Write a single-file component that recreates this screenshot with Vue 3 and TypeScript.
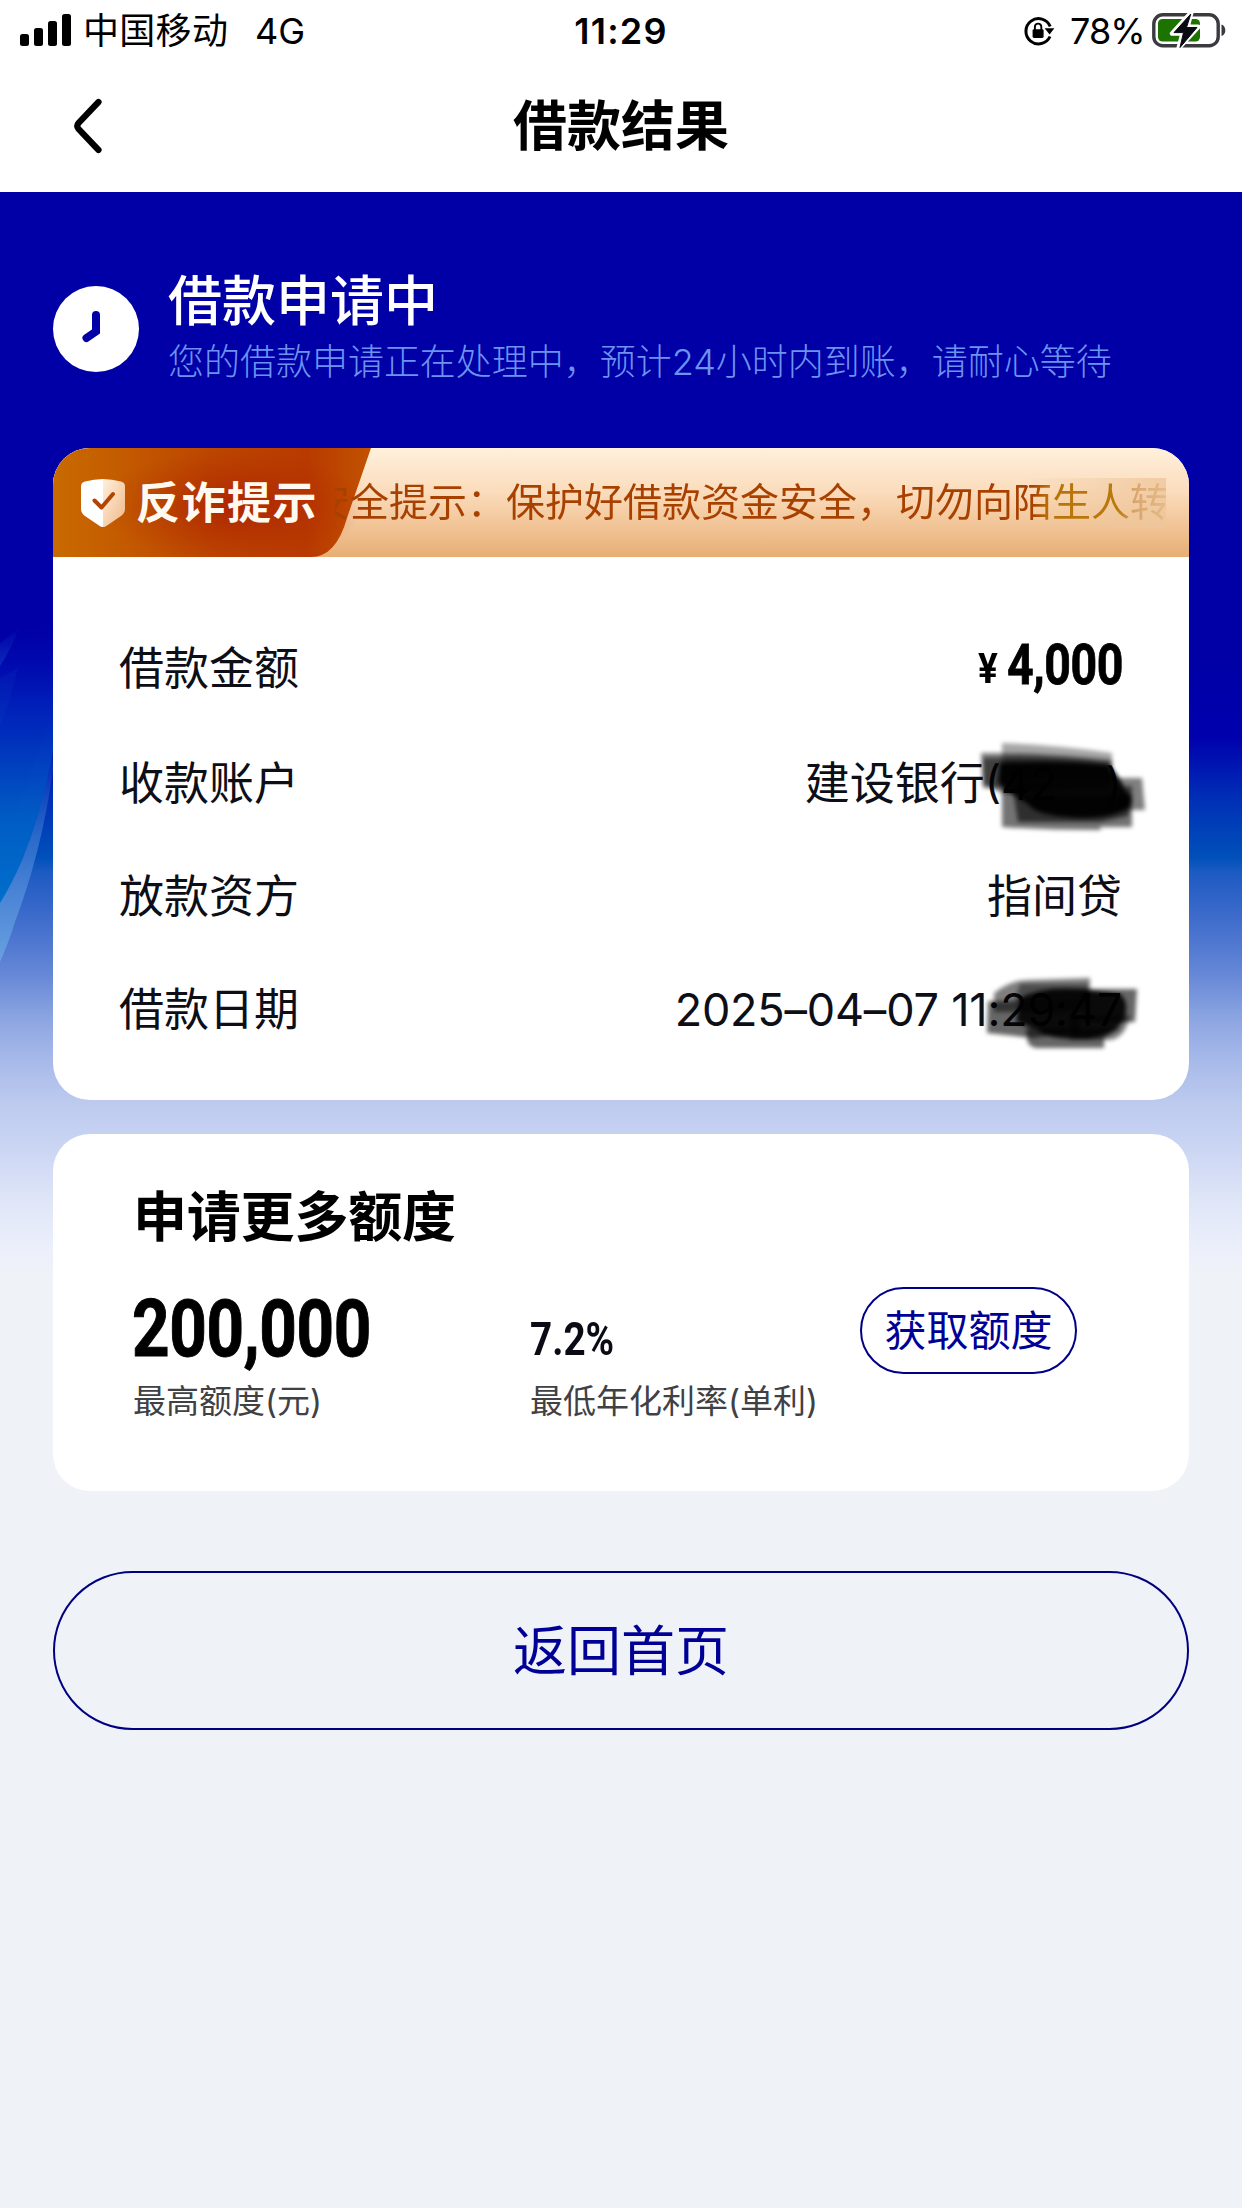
<script setup lang="ts">
interface Detail {
  key: string
  label: string
}

const details: Detail[] = [
  { key: 'amount', label: '借款金额' },
  { key: 'account', label: '收款账户' },
  { key: 'lender', label: '放款资方' },
  { key: 'date', label: '借款日期' },
]

const signalBars: number[] = [12, 18, 25, 32]
</script>

<template>
  <div class="page">
    <header class="status">
      <div class="status-left">
        <div class="signal">
          <i v-for="h in signalBars" :key="h" :style="{ height: h + 'px' }"></i>
        </div>
        <span class="carrier">中国移动</span>
        <span class="network">4G</span>
      </div>
      <span class="time">11:29</span>
      <div class="status-right">
        <svg class="lock" viewBox="0 0 34 32" width="34" height="32">
          <path d="M28 21.5A12.6 12.6 0 1 1 28.2 11.5" fill="none" stroke="#000" stroke-width="3" />
          <path d="M22.6 13.2H32.4L27.6 19.6Z" fill="#000" />
          <rect x="10.6" y="14.2" width="11" height="8.8" rx="1.4" fill="#000" />
          <path d="M12.9 15V11.8a3.2 3.2 0 0 1 6.4 0V15" fill="none" stroke="#000" stroke-width="1.9" />
        </svg>
        <span class="percent">78%</span>
        <svg class="battery" viewBox="0 0 76 40" width="76" height="40">
          <rect x="1.8" y="4.8" width="64.4" height="31" rx="9" fill="#fff" stroke="#3b3a3f" stroke-width="3.4" />
          <path d="M69.5 14.5C74.6 16 74.6 24.600 69.5 26Z" fill="#3b3a3f" />
          <rect x="6" y="9" width="42" height="22.600" rx="4.500" fill="#1d7300" />
          <path d="M39.500 2L20 23.500H30.500L26.500 38.500L46.500 16.800H35.500Z" fill="#0a0a12" stroke="#fff" stroke-width="4.500" stroke-linejoin="round" />
          <path d="M38.800 4L22 22.600H31.500L28 37.500L45 17.500H34.500Z" fill="#0a0a12" stroke="#0a0a12" stroke-width="1" stroke-linejoin="round" />
        </svg>
      </div>
    </header>

    <nav class="nav">
      <svg class="back" viewBox="0 0 40 60" width="40" height="60">
        <path d="M29.500 6L9.500 27Q7 30 9.500 33L29.500 54" fill="none" stroke="#000" stroke-width="6.200" stroke-linecap="round" />
      </svg>
      <h1>借款结果</h1>
    </nav>

    <main class="body">
      <svg class="rays" viewBox="0 0 53 500" width="53" height="500">
        <defs>
          <linearGradient id="rayDeep" x1="0" y1="0" x2="0" y2="1">
            <stop offset="0" stop-color="#0008b4" stop-opacity="0" />
            <stop offset="0.3" stop-color="#0028bc" stop-opacity="0.8" />
            <stop offset="0.7" stop-color="#005cc4" />
            <stop offset="1" stop-color="#006fcb" />
          </linearGradient>
          <linearGradient id="rayPale" x1="0" y1="0" x2="0" y2="1">
            <stop offset="0" stop-color="#0040c0" stop-opacity="0" />
            <stop offset="0.5" stop-color="#3c78d2" stop-opacity="0.7" />
            <stop offset="1" stop-color="#68a0e0" />
          </linearGradient>
          <linearGradient id="rayGlint" x1="0" y1="0" x2="0" y2="1">
            <stop offset="0" stop-color="#1040c4" stop-opacity="0" />
            <stop offset="1" stop-color="#1448c8" stop-opacity="0.5" />
          </linearGradient>
        </defs>
        <path d="M53 150V210Q42 290 15 362Q8 384 0 402V300Z" fill="url(#rayPale)" />
        <path d="M0 80L53 60V190Q44 246 23 298Q12 324 0 343Z" fill="url(#rayDeep)" />
        <path d="M20 66Q12 88 0 106V84Z" fill="url(#rayGlint)" />
        <path d="M18 108Q10 142 0 166V118Z" fill="#1048c4" opacity="0.15" />
      </svg>

      <section class="result">
        <svg class="clock" viewBox="0 0 86 86" width="86" height="86">
          <circle cx="43" cy="43" r="43" fill="#fff" />
          <path d="M43 29V45.500L33.500 52" fill="none" stroke="#0000a6" stroke-width="8" stroke-linecap="round" stroke-linejoin="miter" />
        </svg>
        <div class="result-text">
          <h2>借款申请中</h2>
          <p>您的借款申请正在处理中，预计24小时内到账，请耐心等待</p>
        </div>
      </section>

      <section class="card loan">
        <div class="banner">
          <svg class="tag-shape" viewBox="0 0 318 109" width="318" height="109">
            <defs>
              <linearGradient id="tagBase" x1="0" y1="0" x2="1" y2="0">
                <stop offset="0" stop-color="#c96a00" />
                <stop offset="0.5" stop-color="#bc4600" />
                <stop offset="0.8" stop-color="#b83a00" />
                <stop offset="1" stop-color="#c25200" />
              </linearGradient>
              <radialGradient id="tagGlow" cx="0.5" cy="0.5" r="0.5">
                <stop offset="0" stop-color="#a81800" stop-opacity="0.7" />
                <stop offset="1" stop-color="#b02800" stop-opacity="0" />
              </radialGradient>
            </defs>
            <path d="M0 0H318L294 70Q283 109 258 109H0Z" fill="url(#tagBase)" />
            <ellipse cx="180" cy="58" rx="130" ry="58" fill="url(#tagGlow)" />
          </svg>
          <div class="tag">
            <svg viewBox="0 0 46 50" width="46" height="50">
              <defs>
                <linearGradient id="shieldHalf" x1="0" y1="0" x2="1" y2="1">
                  <stop offset="0" stop-color="#fff0dc" />
                  <stop offset="1" stop-color="#f0b888" />
                </linearGradient>
              </defs>
              <path d="M23 1Q14 1 5 3.500Q1 4.500 1 8V31Q1 35 5 38L19 47.500Q21 49 23 49Z" fill="#fff" />
              <path d="M23 1Q32 1 41 3.500Q45 4.500 45 8V31Q45 35 41 38L27 47.500Q25 49 23 49Z" fill="url(#shieldHalf)" />
              <path d="M14.500 22.500L21.500 29.500L33 16" fill="none" stroke="#b04400" stroke-width="4" stroke-linecap="round" stroke-linejoin="round" />
            </svg>
            <strong>反诈提示</strong>
          </div>
          <div class="marquee">
            <i class="fade"></i>
            <span>安全提示：保护好借款资金安全，切勿向陌生人转</span>
          </div>
        </div>

        <dl class="details">
          <div v-for="d in details" :key="d.key" class="detail" :class="d.key">
            <dt>{{ d.label }}</dt>
            <dd v-if="d.key === 'amount'" class="money"><span class="yen">¥</span><span class="sum">4,000</span></dd>
            <dd v-else-if="d.key === 'account'">
              建设银行(42<span class="masked"></span>)
              <svg class="ink ink-account" viewBox="0 0 180 100" width="180" height="100">
                <g fill="#000">
                  <path d="M32 7Q85 9 142 17V42H32Z" opacity="0.35" />
                  <path d="M11 17Q70 16 142 24V52H13Z" opacity="0.5" />
                  <path d="M13 22Q80 20 140 27L150 48L34 58L13 48Z" opacity="0.5" />
                  <path d="M32 50H162V91H130L131 94Q80 94 32 91Z" opacity="0.55" />
                  <path d="M148 42H172L175 74H148Z" opacity="0.5" />
                  <path d="M44 60H162L158 80L130 86H48Z" opacity="0.6" />
                  <path d="M30 27Q90 24 138 29Q150 40 155 54Q166 62 160 70Q148 82 110 82Q65 80 58 68Q36 56 28 46Z" opacity="0.95" />
                </g>
              </svg>
            </dd>
            <dd v-else-if="d.key === 'lender'">指间贷</dd>
            <dd v-else>
              <span class="stamp">2025–04–07 11:29:47</span>
              <svg class="ink ink-date" viewBox="0 0 180 90" width="180" height="90">
                <g fill="#000">
                  <path d="M24 21Q40 8 58 8L120 6V40H24Z" opacity="0.5" />
                  <path d="M18 29H110V60L62 66L17 61Z" opacity="0.6" />
                  <path d="M50 12L118 12V30H44Z" opacity="0.4" />
                  <path d="M112 17H167L165 50H112Z" opacity="0.6" />
                  <path d="M56 56H152L134 66V76H66Q57 74 57 66Z" opacity="0.6" />
                  <path d="M100 44H160Q155 66 140 68H100Z" opacity="0.5" />
                  <path d="M50 26Q72 14 110 17L150 22Q160 30 154 48Q146 62 118 67Q76 68 68 58L46 50Z" opacity="0.9" />
                </g>
              </svg>
            </dd>
          </div>
        </dl>
      </section>

      <section class="card quota">
        <h3>申请更多额度</h3>
        <div class="quota-row">
          <div class="figure limit">
            <b>200,000</b>
            <small>最高额度(元)</small>
          </div>
          <div class="figure rate">
            <b>7.2%</b>
            <small>最低年化利率(单利)</small>
          </div>
          <button class="get" type="button">获取额度</button>
        </div>
      </section>

      <button class="home" type="button">返回首页</button>
    </main>
  </div>
</template>

<style>
body {
  background: #eff2f7;
}
</style>

<style scoped>
.page {
  width: 1242px;
  height: 2208px;
  display: flex;
  flex-direction: column;
  overflow: hidden;
  background: #eff2f7;
  color: #0d0e16;
  font-family: Inter, 'Noto Sans CJK SC', sans-serif;
}

.page * {
  box-sizing: border-box;
}

h1,
h2,
h3,
p,
dl,
dd {
  margin: 0;
}

button {
  padding: 0;
  background: transparent;
  font-family: inherit;
}

.status {
  height: 60px;
  display: grid;
  grid-template-columns: 1fr 100px 1fr;
  background: #fff;
  color: #000;
  font-size: 36px;
  line-height: 63px;
  white-space: nowrap;
}

.status-left,
.status-right {
  display: flex;
}

.signal {
  display: flex;
  align-items: flex-end;
  gap: 5px;
  height: 46px;
  margin: 0 12px 0 20px;
}

.signal i {
  width: 9px;
  border-radius: 2.5px;
  background: #000;
}

.carrier {
  width: 172px;
  letter-spacing: 0.3px;
}

.network {
  font-size: 36px;
}

.time {
  text-align: center;
  font-weight: 600;
  letter-spacing: 1.2px;
}

.status-right {
  justify-content: flex-end;
}

.lock {
  margin: 15px 14px 0 0;
}

.percent {
  width: 82px;
  letter-spacing: -0.9px;
}

.battery {
  margin: 10px 14px 0 0;
}

.nav {
  height: 132px;
  display: grid;
  grid-template-columns: 120px 1fr 120px;
  background: #fff;
}

.back {
  margin: 36px 0 0 69px;
}

.nav h1 {
  text-align: center;
  color: #000;
  font-size: 54px;
  font-weight: 700;
  line-height: 134px;
}

.body {
  position: relative;
  flex: 1;
  display: flex;
  flex-direction: column;
  align-items: center;
  background: linear-gradient(
    #0000a6 0,
    #0000a6 460px,
    #0000ae 545px,
    #0030b6 608px,
    #0050ba 665px,
    #1c5ac2 680px,
    #3a69ca 720px,
    #6486d6 780px,
    #8ba4e1 825px,
    #a8baea 870px,
    #bccaee 910px,
    #c9d4f3 950px,
    #dfe6f8 1010px,
    #edf0fb 1060px,
    #eff2f7 1085px
  );
}

.rays {
  position: absolute;
  left: 0;
  top: 368px;
}

.result {
  width: 1136px;
  height: 256px;
  display: flex;
  gap: 29px;
}

.clock {
  margin-top: 94px;
}

.result-text {
  padding-top: 70px;
}

.result h2 {
  color: #fff;
  font-size: 54px;
  font-weight: 500;
  line-height: 80px;
}

.result p {
  color: #6d93f2;
  font-size: 36px;
  font-weight: 300;
  line-height: 40px;
  letter-spacing: -0.02px;
  white-space: nowrap;
}

.card {
  width: 1136px;
  border-radius: 37px;
  background: #fff;
}

.loan {
  height: 652px;
}

.banner {
  position: relative;
  height: 109px;
  display: flex;
  overflow: hidden;
  border-radius: 37px 37px 0 0;
  background: linear-gradient(#fff0dc, #fbdcbc 40%, #e8ae74);
}

.tag-shape {
  position: absolute;
  left: 0;
  top: 0;
}

.tag {
  position: relative;
  width: 282px;
  display: flex;
  align-items: center;
  padding-left: 27px;
}

.tag strong {
  margin-left: 10px;
  color: #fffaf0;
  font-size: 44px;
  font-weight: 700;
  line-height: 112px;
  letter-spacing: 1.5px;
  white-space: nowrap;
}

.marquee {
  position: relative;
  width: 831px;
  height: 50px;
  margin-top: 30px;
  display: flex;
  justify-content: flex-end;
  overflow: hidden;
}

.marquee span {
  position: relative;
  margin-right: -3px;
  color: transparent;
  background: linear-gradient(90deg, #a84000 84%, #b87208 86%, #b97a0c 94%, rgba(200, 140, 70, 0.6) 96%, rgba(215, 165, 110, 0.35));
  -webkit-background-clip: text;
  background-clip: text;
  font-size: 39px;
  line-height: 48px;
  white-space: nowrap;
}

.fade {
  position: absolute;
  right: 0;
  top: 0;
  width: 140px;
  height: 50px;
  background: linear-gradient(90deg, rgba(240, 200, 160, 0), rgba(238, 198, 155, 0.8));
}

.details {
  padding: 55px 67px 0;
}

.detail {
  height: 113px;
  display: flex;
  justify-content: space-between;
  font-size: 45px;
  line-height: 113px;
  white-space: nowrap;
}

.detail dt {
  margin-left: -1px;
}

.detail.amount {
  height: 115px;
}

.detail dd {
  position: relative;
  display: flex;
}

.money {
  color: #000;
  font-family: Roboto, sans-serif;
  font-weight: 700;
}

.yen {
  width: 29px;
  font-size: 42px;
  line-height: 114px;
  transform: scaleX(0.88);
  transform-origin: left;
}

.sum {
  width: 115px;
  font-size: 56px;
  line-height: 107px;
  letter-spacing: -0.5px;
  transform: scaleX(0.83);
  transform-origin: left;
  -webkit-text-stroke: 0.8px #000;
}

.masked {
  width: 48px;
}

.ink {
  position: absolute;
  filter: blur(2px);
}

.ink-account {
  left: 165px;
  top: 9px;
}

.ink-date {
  right: -28px;
  top: 19px;
}

.stamp {
  letter-spacing: -0.2px;
}

.quota {
  height: 357px;
  margin-top: 34px;
  padding: 44px 78px 0;
}

.quota h3 {
  margin-left: 2px;
  color: #000;
  font-size: 54px;
  font-weight: 700;
  line-height: 80px;
  letter-spacing: -0.2px;
}

.quota-row {
  height: 160px;
  display: flex;
}

.figure {
  display: flex;
  flex-direction: column;
  color: #0a0b14;
}

.figure b {
  height: 118px;
  font-family: Roboto, sans-serif;
  transform-origin: left;
}

.figure small {
  color: #404145;
  font-size: 33px;
  line-height: 50px;
  white-space: nowrap;
}

.limit {
  width: 399px;
  padding-left: 2px;
}

.limit b {
  margin-left: -1px;
  color: #000;
  font-size: 79px;
  line-height: 142px;
  letter-spacing: -0.5px;
  transform: scaleX(0.83);
  -webkit-text-stroke: 1px #000;
}

.rate {
  width: 330px;
}

.rate b {
  font-size: 46px;
  line-height: 162px;
  transform: scaleX(0.84);
}

.get {
  width: 217px;
  height: 87px;
  margin-top: 29px;
  border: 2px solid #000087;
  border-radius: 44px;
  color: #000096;
  font-size: 42px;
  line-height: 83px;
}

.home {
  width: 1136px;
  height: 159px;
  margin-top: 80px;
  border: 2px solid #000080;
  border-radius: 80px;
  color: #000096;
  font-size: 54px;
  line-height: 158px;
}
</style>
